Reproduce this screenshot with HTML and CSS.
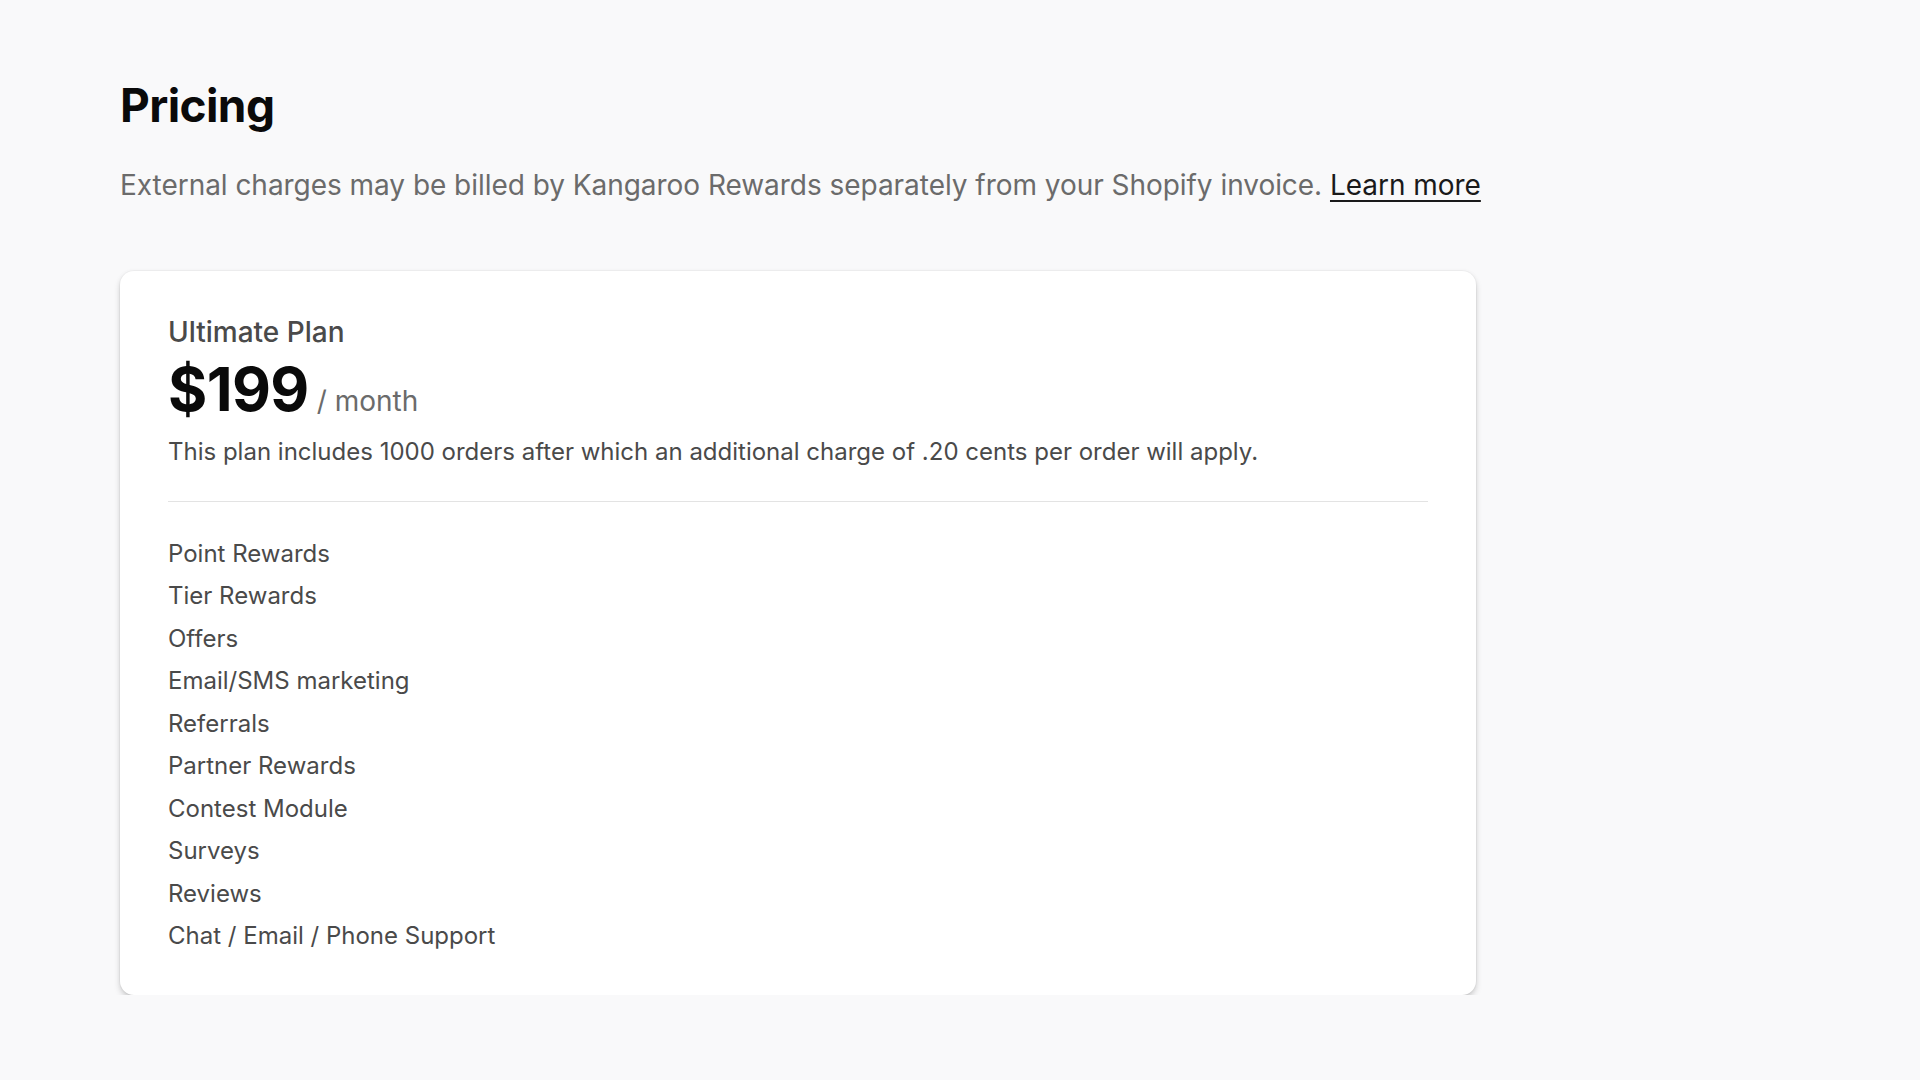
FILE: index.html
```html
<!DOCTYPE html>
<html lang="en">
<head>
<meta charset="utf-8">
<title>Pricing</title>
<link rel="stylesheet" href="styles.css">
</head>
<body>
<main class="page">
  <h1 class="title">Pricing</h1>
  <p class="subtitle">External charges may be billed by Kangaroo Rewards separately from your Shopify invoice. <a class="link" href="#">Learn more</a></p>
  <section class="card">
    <div class="plan-name">Ultimate Plan</div>
    <div class="price-row"><span class="price">$199</span><span class="period">/ month</span></div>
    <p class="desc">This plan includes 1000 orders after which an additional charge of .20 cents per order will apply.</p>
    <hr class="divider">
    <ul class="features">
      <li>Point Rewards</li>
      <li>Tier Rewards</li>
      <li>Offers</li>
      <li>Email/SMS marketing</li>
      <li>Referrals</li>
      <li>Partner Rewards</li>
      <li>Contest Module</li>
      <li>Surveys</li>
      <li>Reviews</li>
      <li>Chat / Email / Phone Support</li>
    </ul>
  </section>
</main>
</body>
</html>
```

FILE: styles.css
```css
html, body {
  margin: 0;
  padding: 0;
  background: #f9f9fa;
}
body {
  font-family: Inter, "Noto Sans", "Liberation Sans", sans-serif;
  color: #303030;
}
.page {
  padding: 77px 0 0 120px;
  width: 1356px;
}
.title {
  margin: 0;
  font-size: 46px;
  line-height: 57px;
  font-weight: 700;
  color: #0a0a0a;
  letter-spacing: -0.6px;
}
.subtitle {
  margin: 31px 0 0 0;
  font-size: 28px;
  line-height: 40px;
  color: #6b6b6b;
  white-space: nowrap;
  letter-spacing: -0.04px;
}
.link {
  color: #1a1a1a;
  text-decoration: underline;
  text-underline-offset: 5px;
  text-decoration-thickness: 2px;
}
.card {
  margin-top: 66px;
  background: #ffffff;
  border-radius: 14px;
  padding: 43px 48px 37px 48px;
  box-shadow: 0 0 0 1px rgba(0, 0, 0, 0.025), 0 4px 7px -1px rgba(0, 0, 0, 0.22), 0 0 5px rgba(0, 0, 0, 0.04);
}
.plan-name {
  font-size: 28px;
  line-height: 36px;
  font-weight: 500;
  color: #4a4a4a;
}
.price-row {
  margin-top: 3px;
  display: flex;
  align-items: baseline;
  gap: 8px;
  height: 72px;
}
.price {
  font-size: 60px;
  line-height: 72px;
  font-weight: 700;
  color: #0a0a0a;
  letter-spacing: -0.6px;
}
.period {
  font-size: 28px;
  line-height: 1;
  color: #6b6b6b;
}
.desc {
  margin: 9px 0 0 0;
  font-size: 24px;
  line-height: 36px;
  color: #4a4a4a;
}
.divider {
  margin: 31px 0 0 0;
  border: 0;
  height: 1px;
  background: #e3e3e3;
}
.features {
  list-style: none;
  margin: 30.5px 0 0 0;
  padding: 0;
}
.features li {
  font-size: 24px;
  line-height: 42.55px;
  color: #4a4a4a;
}
```
